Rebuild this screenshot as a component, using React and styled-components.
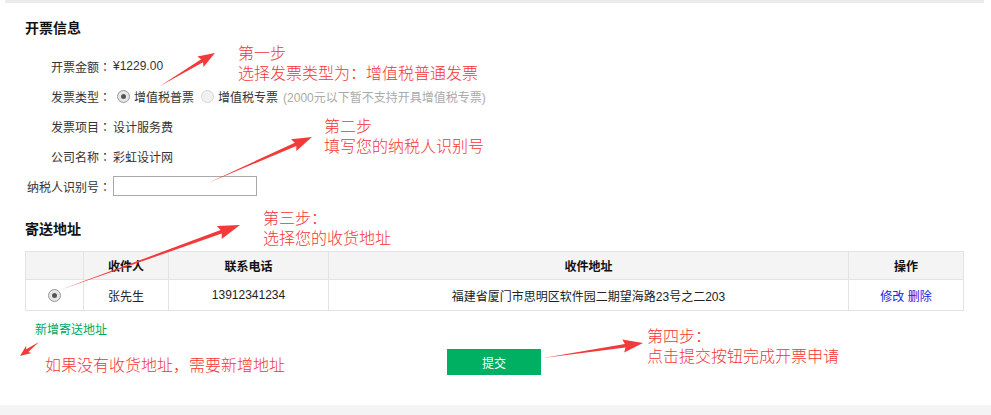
import React from 'react';
import styled, { createGlobalStyle } from 'styled-components';

const GlobalStyle = createGlobalStyle`
    html, body {
        margin: 0;
        padding: 0;
        background: #fff;
    }
    body {
        font-family: "Liberation Sans", "Noto Sans CJK SC", Arial, sans-serif;
        font-size: 12px;
        color: #333;
    }
`

const infoRows = [
    { label: "开票金额", value: "¥1229.00" },
    { label: "发票类型", type: "radio" },
    { label: "发票项目", value: "设计服务费" },
    { label: "公司名称", value: "彩虹设计网" },
    { label: "纳税人识别号", type: "input" },
]

const addresses = [
    { name: "张先生", phone: "13912341234", addr: "福建省厦门市思明区软件园二期望海路23号之二203" },
]

// annotation arrows, tail -> tip
const arrows = [
    { from: [160, 86], to: [215, 53], head: 15, wide: 12 },
    { from: [208, 183], to: [312, 137], head: 18, wide: 13 },
    { from: [60, 290], to: [240, 225], head: 20, wide: 14 },
    { from: [543, 358], to: [643, 343], head: 18, wide: 13 },
    { from: [39, 342], to: [20, 356], head: 9, wide: 9 },
]

const notes = [
    { x: 238, y: 42, lines: ["第一步", "选择发票类型为：增值税普通发票"] },
    { x: 324, y: 115, lines: ["第二步", "填写您的纳税人识别号"] },
    { x: 263, y: 207, lines: ["第三步：", "选择您的收货地址"] },
    { x: 647, y: 325, lines: ["第四步：", "点击提交按钮完成开票申请"] },
    { x: 45, y: 354, lines: ["如果没有收货地址，需要新增地址"] },
]

const arrowPoints = ({ from, to, head, wide }) => {
    const dx = to[0] - from[0]
    const dy = to[1] - from[1]
    const len = Math.hypot(dx, dy)
    const ux = dx / len, uy = dy / len
    const nx = -uy, ny = ux
    const bx = to[0] - ux * head, by = to[1] - uy * head
    const shaft = 1.8
    const pts = [
        from,
        [bx + nx * shaft, by + ny * shaft],
        [bx - ux * 2 + nx * wide / 2, by - uy * 2 + ny * wide / 2],
        to,
        [bx - ux * 2 - nx * wide / 2, by - uy * 2 - ny * wide / 2],
        [bx - nx * shaft, by - ny * shaft],
    ]
    return pts.map(p => p.join(",")).join(" ")
}

const App = () => {
    return (
        <StPage>
            <GlobalStyle />
            <StTopBar />
            <StContent>
                <StSectionTitle>开票信息</StSectionTitle>
                <StInfoList>
                    {infoRows.map((row) => (
                        <StInfoRow key={row.label}>
                            <StLabel>{row.label}<StColon>：</StColon></StLabel>
                            {row.type === "radio" ? (
                                <StValue>
                                    <StRadioLabel>
                                        <StRadio type="radio" name="invoiceType" defaultChecked />
                                        增值税普票
                                    </StRadioLabel>
                                    <StRadioLabel>
                                        <StRadio type="radio" name="invoiceType" disabled />
                                        增值税专票
                                    </StRadioLabel>
                                    <StHint>(2000元以下暂不支持开具增值税专票)</StHint>
                                </StValue>
                            ) : row.type === "input" ? (
                                <StTaxInput type="text" />
                            ) : (
                                <StValue>{row.value}</StValue>
                            )}
                        </StInfoRow>
                    ))}
                </StInfoList>

                <StSectionTitle className="address">寄送地址</StSectionTitle>
                <StTable>
                    <colgroup>
                        <col style={{ width: 58 }} />
                        <col style={{ width: 85 }} />
                        <col style={{ width: 160 }} />
                        <col style={{ width: 520 }} />
                        <col style={{ width: 115 }} />
                    </colgroup>
                    <thead>
                        <tr>
                            <th></th>
                            <th>收件人</th>
                            <th>联系电话</th>
                            <th>收件地址</th>
                            <th>操作</th>
                        </tr>
                    </thead>
                    <tbody>
                        {addresses.map((a) => (
                            <tr key={a.phone}>
                                <td><StRadio type="radio" name="address" defaultChecked /></td>
                                <td>{a.name}</td>
                                <td>{a.phone}</td>
                                <td>{a.addr}</td>
                                <td>
                                    <StLink>修改</StLink> <StLink>删除</StLink>
                                </td>
                            </tr>
                        ))}
                    </tbody>
                </StTable>
                <StAddLink>新增寄送地址</StAddLink>
                <StSubmitRow>
                    <StSubmit>提交</StSubmit>
                </StSubmitRow>
            </StContent>
            <StBottomBar />

            <StNotes>
                <svg width="991" height="415" viewBox="0 0 991 415">
                    {arrows.map((a, i) => (
                        <polygon key={i} points={arrowPoints(a)} fill="#f23a3a" />
                    ))}
                </svg>
                {notes.map((n) => (
                    <StNote key={n.lines[0]} style={{ left: n.x, top: n.y }}>
                        {n.lines.map((l) => <div key={l}>{l}</div>)}
                    </StNote>
                ))}
            </StNotes>
        </StPage>
    );
};

export default App;

const StPage = styled.div`
    position: relative;
    width: 991px;
    height: 415px;
    overflow: hidden;
    background: #fff;
`
const StTopBar = styled.div`
    height: 3px;
    margin: 0 7px 0 5px;
    background: #ebebeb;
`
const StContent = styled.div`
    padding: 0 28px 0 25px;
`
const StSectionTitle = styled.div`
    font-family: "Noto Sans CJK SC", sans-serif;
    font-size: 14px;
    font-weight: bold;
    line-height: 20px;
    color: #111;
    margin-top: 14px;
    &.address {
        margin-top: 17px;
    }
`
const StInfoList = styled.div`
    display: flex;
    flex-direction: column;
    margin-top: 14px;
`
const StInfoRow = styled.div`
    display: grid;
    grid-template-columns: 86px 1fr;
    column-gap: 2px;
    align-items: center;
    height: 30px;
`
const StLabel = styled.div`
    text-align: right;
    color: #333;
    white-space: nowrap;
`
const StColon = styled.span`
    display: inline-block;
    width: 12px;
    text-align: center;
    font-family: "Noto Sans CJK TC", sans-serif;
`
const StValue = styled.div`
    display: flex;
    align-items: center;
    color: #333;
`
const StRadioLabel = styled.label`
    display: inline-flex;
    align-items: center;
    margin-right: 3px;
    color: #333;
`
const StRadio = styled.input`
    appearance: none;
    width: 13px;
    height: 13px;
    margin: 0 4px 0 4px;
    border-radius: 50%;
    border: 1px solid #9a9a9a;
    background: radial-gradient(circle, #f2f2f2 0%, #dcdcdc 100%);
    box-sizing: border-box;
    position: relative;
    &:checked::after {
        content: "";
        position: absolute;
        left: 3px;
        top: 3px;
        width: 5px;
        height: 5px;
        border-radius: 50%;
        background: #555;
    }
    &:disabled {
        border-color: #d6d6d6;
        background: #f1f1f1;
    }
`
const StHint = styled.span`
    color: #aaa;
    margin-left: 2px;
`
const StTaxInput = styled.input`
    width: 144px;
    height: 20px;
    box-sizing: border-box;
    border: 1px solid #a9a9a9;
    margin: 0;
    padding: 0 3px;
    font-size: 12px;
`
const StTable = styled.table`
    width: 938px;
    margin-top: 13px;
    border-collapse: collapse;
    table-layout: fixed;
    th, td {
        border: 1px solid #e3e3e3;
        text-align: center;
        padding: 0;
        font-size: 12px;
        color: #222;
    }
    th {
        height: 27px;
        background: #f4f4f4;
        font-family: "Noto Sans CJK SC", sans-serif;
        font-weight: bold;
        color: #111;
    }
    td {
        height: 30px;
    }
    td input {
        vertical-align: middle;
        margin: 0;
    }
`
const StLink = styled.a`
    color: #2222dd;
    cursor: pointer;
`
const StAddLink = styled.div`
    color: #00a860;
    margin: 11px 0 0 10px;
    line-height: 16px;
`
const StSubmitRow = styled.div`
    display: flex;
    justify-content: center;
    margin-top: 11px;
`
const StSubmit = styled.button`
    width: 94px;
    height: 26px;
    border: none;
    background: #00b062;
    color: #fff;
    font-family: "Noto Sans CJK SC", sans-serif;
    font-size: 12px;
    cursor: pointer;
`
const StBottomBar = styled.div`
    position: absolute;
    left: 0;
    right: 0;
    top: 405px;
    height: 10px;
    background: #f4f4f4;
`
const StNotes = styled.div`
    position: absolute;
    inset: 0;
    pointer-events: none;
    svg {
        position: absolute;
        left: 0;
        top: 0;
    }
`
const StNote = styled.div`
    position: absolute;
    font-family: "Noto Sans CJK SC", sans-serif;
    font-size: 16px;
    font-weight: 300;
    line-height: 20px;
    color: #f53535;
    white-space: nowrap;
`
